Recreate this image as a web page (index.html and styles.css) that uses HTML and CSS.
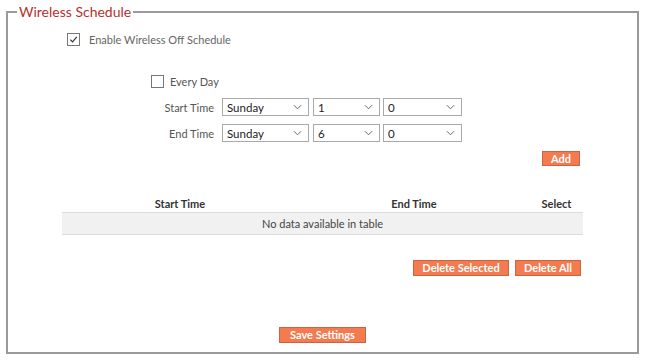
FILE: index.html
```html
<!DOCTYPE html>
<html lang="en">
<head>
    <meta charset="UTF-8">
    <title>Wireless Schedule</title>
    <link rel="stylesheet" href="styles.css">
</head>
<body>
    <fieldset class="panel">
        <legend class="panel-title">Wireless Schedule</legend>

        <label class="check-row enable-row">
            <span class="box"><svg viewBox="0 0 12 12" width="12" height="12"><path d="M2.5 6.2 L5 8.7 L9.6 3.2" fill="none" stroke="#333" stroke-width="1.3"/></svg></span>
            <span>Enable Wireless Off Schedule</span>
        </label>

        <label class="check-row everyday-row">
            <span class="box"></span>
            <span>Every Day</span>
        </label>

        <div class="time-grid">
            <span class="time-label">Start Time</span>
            <span class="sel sel-day"><span>Sunday</span><svg viewBox="0 0 10 6" width="9" height="6"><path d="M1 1 L5 5 L9 1" fill="none" stroke="#555" stroke-width="1"/></svg></span>
            <span class="sel sel-hour"><span>1</span><svg viewBox="0 0 10 6" width="9" height="6"><path d="M1 1 L5 5 L9 1" fill="none" stroke="#555" stroke-width="1"/></svg></span>
            <span class="sel sel-min"><span>0</span><svg viewBox="0 0 10 6" width="9" height="6"><path d="M1 1 L5 5 L9 1" fill="none" stroke="#555" stroke-width="1"/></svg></span>

            <span class="time-label">End Time</span>
            <span class="sel sel-day"><span>Sunday</span><svg viewBox="0 0 10 6" width="9" height="6"><path d="M1 1 L5 5 L9 1" fill="none" stroke="#555" stroke-width="1"/></svg></span>
            <span class="sel sel-hour"><span>6</span><svg viewBox="0 0 10 6" width="9" height="6"><path d="M1 1 L5 5 L9 1" fill="none" stroke="#555" stroke-width="1"/></svg></span>
            <span class="sel sel-min"><span>0</span><svg viewBox="0 0 10 6" width="9" height="6"><path d="M1 1 L5 5 L9 1" fill="none" stroke="#555" stroke-width="1"/></svg></span>
        </div>

        <div class="add-row">
            <button class="btn btn-add">Add</button>
        </div>

        <table class="schedule-table">
            <thead>
                <tr><th class="col-start">Start Time</th><th class="col-end">End Time</th><th class="col-select">Select</th></tr>
            </thead>
            <tbody>
                <tr><td colspan="3" class="empty">No data available in table</td></tr>
            </tbody>
        </table>

        <div class="delete-row">
            <button class="btn btn-del-sel">Delete Selected</button>
            <button class="btn btn-del-all">Delete All</button>
        </div>

        <div class="save-row">
            <button class="btn btn-save">Save Settings</button>
        </div>
    </fieldset>
</body>
</html>
```

FILE: styles.css
```css
body {
    margin: 0;
    padding: 4px 9px 0 6px;
    background-color: #ffffff;
    font-family: 'Lato', 'Liberation Sans', sans-serif;
    font-size: 11px;
    color: #555;
}
.panel {
    margin: 0;
    padding: 0 0 10px 0;
    height: 350px;
    box-sizing: border-box;
    border: 2px solid #9a9a9a;
    border-radius: 0;
}
.panel-title {
    margin-left: 9px;
    padding: 0 2px 0 2px;
    color: #b8302e;
    font-size: 14px;
    line-height: 16px;
}
.check-row {
    display: flex;
    align-items: center;
    gap: 9px;
}
.box {
    display: inline-block;
    width: 11px;
    height: 11px;
    border: 1px solid #777;
    background-color: #fff;
    line-height: 0;
}
.box svg {
    width: 11px;
    height: 11px;
}
.enable-row {
    margin: 13px 0 0 59px;
    color: #666;
}
.everyday-row {
    margin: 29px 0 0 143px;
    gap: 6px;
}
.time-grid {
    display: grid;
    grid-template-columns: 210px 87px 67px 78px;
    column-gap: 4px;
    row-gap: 8px;
    margin-top: 10px;
    align-items: center;
}
.time-label {
    text-align: right;
    padding-right: 4px;
}
.sel {
    display: flex;
    align-items: center;
    justify-content: space-between;
    height: 18px;
    box-sizing: border-box;
    border: 1px solid #a9a9a9;
    padding: 0 6px 0 4px;
    color: #222;
    font-size: 11.5px;
}
.sel-min {
    margin-left: -1px;
}
.add-row {
    display: flex;
    justify-content: flex-end;
    margin: 9px 57px 0 0;
}
.btn {
    background-color: #f47b4f;
    color: #fff;
    font-family: 'Lato', 'Liberation Sans', sans-serif;
    font-weight: bold;
    font-size: 11px;
    border: 1px solid #c8643e;
    padding: 0;
    height: 16px;
    line-height: 14px;
}
.btn-add { width: 38px; height: 15px; }
.btn-del-sel { width: 96px; }
.btn-del-all { width: 66px; }
.btn-save { width: 87px; }
.schedule-table {
    margin: 29px 0 0 54px;
    width: 521px;
    border-collapse: collapse;
}
.schedule-table th {
    font-weight: bold;
    color: #333;
    height: 17px;
    padding: 0;
    border-bottom: 1px solid #dcdcdc;
}
.col-start { width: 236px; }
.col-end { width: 232px; }
.col-select { width: 53px; }
.empty {
    background-color: #f1f1f1;
    text-align: center;
    color: #444;
    height: 21px;
    padding: 0;
    border-bottom: 1px solid #dcdcdc;
}
.delete-row {
    display: flex;
    justify-content: flex-end;
    gap: 6px;
    margin: 25px 56px 0 0;
}
.save-row {
    display: flex;
    justify-content: center;
    margin: 51px 0 0 0;
}
```
